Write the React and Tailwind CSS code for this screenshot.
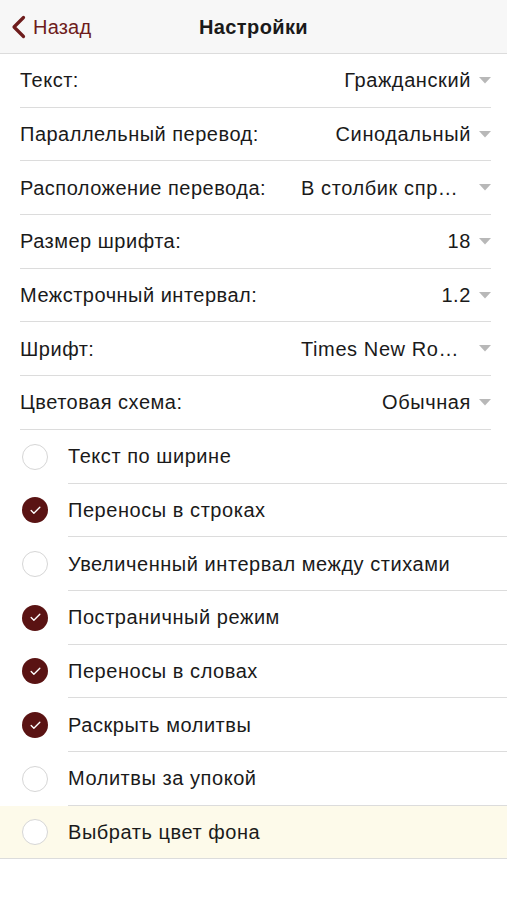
import { Check } from "lucide-react";

const selects = [
  { label: "Текст:", value: "Гражданский" },
  { label: "Параллельный перевод:", value: "Синодальный" },
  { label: "Расположение перевода:", value: "В столбик спр…", clipped: true },
  { label: "Размер шрифта:", value: "18" },
  { label: "Межстрочный интервал:", value: "1.2" },
  { label: "Шрифт:", value: "Times New Ro…", clipped: true },
  { label: "Цветовая схема:", value: "Обычная" },
];

const toggles = [
  { label: "Текст по ширине", on: false },
  { label: "Переносы в строках", on: true },
  { label: "Увеличенный интервал между стихами", on: false },
  { label: "Постраничный режим", on: true },
  { label: "Переносы в словах", on: true },
  { label: "Раскрыть молитвы", on: true },
  { label: "Молитвы за упокой", on: false },
];

function Caret() {
  return (
    <svg width="12" height="7" viewBox="0 0 12 7" className="ml-2 shrink-0">
      <path d="M0 0h12L6 6.5z" fill="#b8b8b8" />
    </svg>
  );
}

function Radio({ on }) {
  return on ? (
    <span className="flex h-[26px] w-[26px] shrink-0 items-center justify-center rounded-full bg-[#5a1313]">
      <Check size={13} strokeWidth={2.5} color="#fff" />
    </span>
  ) : (
    <span className="h-[26px] w-[26px] shrink-0 rounded-full border border-[#d6d6d6] bg-white" />
  );
}

export default function App() {
  return (
    <div
      className="min-h-[900px] w-full bg-white text-[#1a1a1a]"
      style={{ fontFamily: '"Liberation Sans", Arial, sans-serif' }}
    >
      <header className="relative flex h-[54px] items-center justify-center border-b border-[#dcdcdc] bg-[#f7f7f7]">
        <div className="absolute left-[11px] top-0 flex h-full items-center gap-[7px] text-[#6e1c1c]">
          <svg width="15" height="24" viewBox="0 0 15 24">
            <path d="M12.5 2.5L3 12l9.5 9.5" fill="none" stroke="#6e1c1c" strokeWidth="3.2" strokeLinecap="round" strokeLinejoin="round" />
          </svg>
          <span className="text-[20px] tracking-[0.2px]">Назад</span>
        </div>
        <h1 className="text-[20px] font-bold tracking-[0.4px]">Настройки</h1>
      </header>

      {selects.map((s) => (
        <div key={s.label} className="flex h-[53.7px] items-center pl-5 pr-[16px]">
          <div className="flex h-full flex-1 items-center justify-between border-b border-[#dcdcdc]">
            <span className="text-[20px] tracking-[0.5px]">{s.label}</span>
            <span className="flex items-center text-[20px] tracking-[0.6px]">
              {s.clipped ? (
                <span className="w-[170px] whitespace-nowrap">{s.value}</span>
              ) : (
                s.value
              )}
              <Caret />
            </span>
          </div>
        </div>
      ))}

      {toggles.map((t) => (
        <div key={t.label} className="flex h-[53.7px] items-center">
          <div className="flex w-[68px] shrink-0 pl-[22px]">
            <Radio on={t.on} />
          </div>
          <div className="flex h-full flex-1 items-center border-b border-[#dcdcdc] text-[20px] tracking-[0.55px]">
            {t.label}
          </div>
        </div>
      ))}

      <div className="flex h-[53.7px] items-center border-b border-[#dcdcdc] bg-[#fdfaea]">
        <div className="flex w-[68px] shrink-0 pl-[22px]">
          <Radio on={false} />
        </div>
        <div className="text-[20px] tracking-[0.55px]">Выбрать цвет фона</div>
      </div>
    </div>
  );
}
